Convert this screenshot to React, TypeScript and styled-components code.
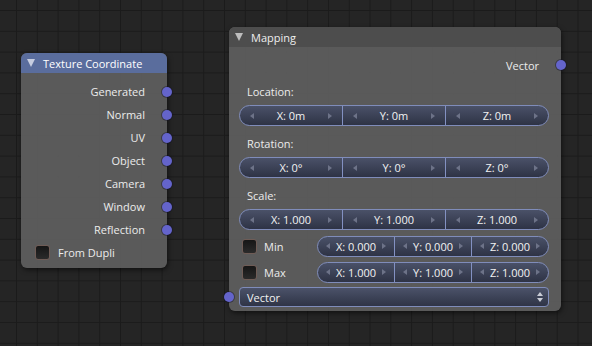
import React from 'react';
import styled, { createGlobalStyle } from 'styled-components';

const GlobalStyle = createGlobalStyle`
  html, body {
    margin: 0;
    padding: 0;
    width: 592px;
    height: 346px;
    overflow: hidden;
    font-family: 'Open Sans', 'Noto Sans', sans-serif;
    font-size: 11px;
  }
`;

const Canvas = styled.div`
  position: relative;
  width: 592px;
  height: 346px;
  overflow: hidden;
  background-color: #252525;
  background-image:
    linear-gradient(to right, #1b1b1b 1px, transparent 1px),
    linear-gradient(to bottom, #1b1b1b 1px, transparent 1px);
  background-size: 20.8px 20.8px;
  background-position: 16px 10px;
`;

const Node = styled.div<{ $x: number; $y: number; $w: number }>`
  position: absolute;
  left: ${(p) => p.$x}px;
  top: ${(p) => p.$y}px;
  width: ${(p) => p.$w}px;
  border-radius: 6px;
  background: rgba(96, 96, 96, 0.9);
  box-shadow: 1px 2px 5px rgba(0, 0, 0, 0.55);
  color: #ececec;
`;

const Header = styled.div<{ $tint: string; $text: string }>`
  height: 20px;
  display: flex;
  align-items: center;
  gap: 8px;
  padding-left: 6px;
  border-radius: 6px 6px 0 0;
  background: ${(p) => p.$tint};
  color: ${(p) => p.$text};
`;

const Collapse = styled.span<{ $color: string }>`
  width: 0;
  height: 0;
  border-left: 4.5px solid transparent;
  border-right: 4.5px solid transparent;
  border-top: 8px solid ${(p) => p.$color};
`;

const Body = styled.div<{ $pad: string }>`
  padding: ${(p) => p.$pad};
  display: flex;
  flex-direction: column;
`;

const OutputRow = styled.div<{ $h: number; $pr: number }>`
  position: relative;
  height: ${(p) => p.$h}px;
  display: flex;
  align-items: center;
  justify-content: flex-end;
  padding-right: ${(p) => p.$pr}px;
`;

const Socket = styled.span<{ $side: 'left' | 'right' }>`
  position: absolute;
  ${(p) => p.$side}: -5px;
  top: 50%;
  width: 10px;
  height: 10px;
  margin-top: -5px;
  border-radius: 50%;
  background: #6464cb;
  box-shadow: 0 0 0 1px rgba(20, 20, 40, 0.45);
`;

const CheckRow = styled.div<{ $h: number; $pl: number }>`
  height: ${(p) => p.$h}px;
  display: flex;
  align-items: center;
  gap: 8px;
  padding-left: ${(p) => p.$pl}px;
`;

const Check = styled.span`
  width: 13px;
  height: 13px;
  border-radius: 3px;
  border: 1px solid #6f5c56;
  background: linear-gradient(#161616, #2a2a2a);
  flex: none;
`;

const Label = styled.div`
  height: 28px;
  display: flex;
  align-items: center;
  padding-left: 18px;
`;

const FieldRow = styled.div<{ $mt: number; $mb?: number }>`
  display: flex;
  align-items: center;
  margin-top: ${(p) => p.$mt}px;
  margin-bottom: ${(p) => p.$mb ?? 0}px;
  padding: 0 12px 0 10px;
  position: relative;
`;

const VectorField = styled.div<{ $w?: number }>`
  display: flex;
  height: 19px;
  ${(p) => (p.$w ? `width: ${p.$w - 2}px; margin-left: auto;` : 'flex: 1;')}
  border: 1px solid #7f8cba;
  border-radius: 11px;
  background: linear-gradient(#4a5168, #2e3345);
  overflow: hidden;
  color: #f2f2f2;
`;

const Segment = styled.div<{ $pad: number }>`
  flex: 1;
  display: flex;
  align-items: center;
  justify-content: space-between;
  padding: 0 ${(p) => p.$pad}px;
  & + & {
    border-left: 1px solid #8391c2;
  }
`;

const Arrow = styled.span<{ $dir: 'left' | 'right' }>`
  width: 0;
  height: 0;
  border-top: 3.5px solid transparent;
  border-bottom: 3.5px solid transparent;
  ${(p) => (p.$dir === 'left' ? 'border-right' : 'border-left')}: 4px solid #6d7388;
`;

const Dropdown = styled.div`
  flex: 1;
  height: 18px;
  display: flex;
  align-items: center;
  justify-content: space-between;
  padding: 0 5px 0 7px;
  border: 1px solid #7f8cba;
  border-radius: 4px;
  background: linear-gradient(#4b5269, #2f3446);
  color: #f2f2f2;
`;

const UpDown = styled.span`
  display: flex;
  flex-direction: column;
  gap: 2px;
  &::before,
  &::after {
    content: '';
    width: 0;
    height: 0;
    border-left: 3.5px solid transparent;
    border-right: 3.5px solid transparent;
  }
  &::before {
    border-bottom: 4px solid #c9ccd6;
  }
  &::after {
    border-top: 4px solid #c9ccd6;
  }
`;

const Row = styled.div<{ $mt: number }>`
  display: flex;
  align-items: center;
  height: 20px;
  margin-top: ${(p) => p.$mt}px;
  padding: 0 12px 0 13px;
`;

const MinLabel = styled.span`
  margin-left: 7px;
`;

const textureOutputs = ['Generated', 'Normal', 'UV', 'Object', 'Camera', 'Window', 'Reflection'];

type Triple = [string, string, string];

function XYZ({ values, pad, width }: { values: Triple; pad: number; width?: number }) {
  return (
    <VectorField $w={width}>
      {values.map((v) => (
        <Segment key={v} $pad={pad}>
          <Arrow $dir="left" />
          <span>{v}</span>
          <Arrow $dir="right" />
        </Segment>
      ))}
    </VectorField>
  );
}

const groups: { label: string; values: Triple }[] = [
  { label: 'Location:', values: ['X: 0m', 'Y: 0m', 'Z: 0m'] },
  { label: 'Rotation:', values: ['X: 0°', 'Y: 0°', 'Z: 0°'] },
  { label: 'Scale:', values: ['X: 1.000', 'Y: 1.000', 'Z: 1.000'] },
];

export default function App() {
  return (
    <Canvas>
      <GlobalStyle />
      <Node $x={21} $y={53} $w={146}>
        <Header $tint="#5a6d9d" $text="#ffffff">
          <Collapse $color="#c6cde0" />
          Texture Coordinate
        </Header>
        <Body $pad="7px 0 5px">
          {textureOutputs.map((o) => (
            <OutputRow key={o} $h={23} $pr={22}>
              {o}
              <Socket $side="right" />
            </OutputRow>
          ))}
          <CheckRow $h={22} $pl={14}>
            <Check />
            From Dupli
          </CheckRow>
        </Body>
      </Node>

      <Node $x={229} $y={27} $w={332}>
        <Header $tint="#4d4d4d" $text="#eeeeee">
          <Collapse $color="#bdbdbd" />
          Mapping
        </Header>
        <Body $pad="6px 0 4px">
          <OutputRow $h={24} $pr={22}>
            Vector
            <Socket $side="right" />
          </OutputRow>
          {groups.map((g, i) => (
            <React.Fragment key={g.label}>
              <Label>{g.label}</Label>
              <FieldRow $mt={0} $mb={i < 2 ? 3 : 0}>
                <XYZ values={g.values} pad={10} />
              </FieldRow>
            </React.Fragment>
          ))}
          <Row $mt={6}>
            <Check />
            <MinLabel>Min</MinLabel>
            <XYZ values={['X: 0.000', 'Y: 0.000', 'Z: 0.000']} pad={8} width={232} />
          </Row>
          <Row $mt={6}>
            <Check />
            <MinLabel>Max</MinLabel>
            <XYZ values={['X: 1.000', 'Y: 1.000', 'Z: 1.000']} pad={8} width={232} />
          </Row>
          <FieldRow $mt={5}>
            <Socket $side="left" />
            <Dropdown>
              Vector
              <UpDown />
            </Dropdown>
          </FieldRow>
        </Body>
      </Node>
    </Canvas>
  );
}
